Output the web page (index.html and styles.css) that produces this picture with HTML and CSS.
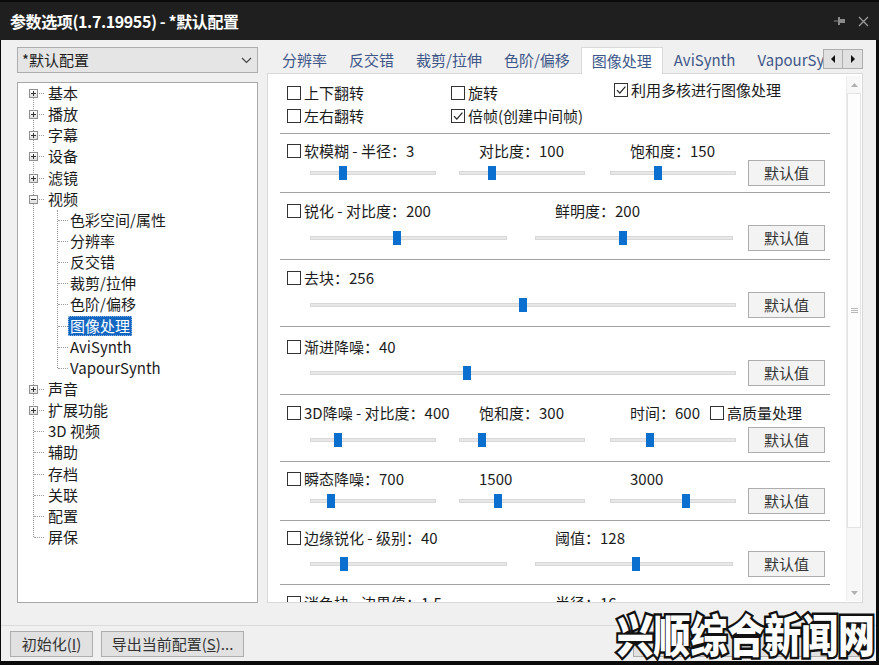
FILE: index.html
```html
<!DOCTYPE html>
<html lang="zh-CN">
<head>
<meta charset="utf-8">
<title>参数选项</title>
<link rel="stylesheet" href="styles.css">
</head>
<body>
<div class="window">
  <div class="titlebar">
    <span class="title">参数选项(1.7.19955) - *默认配置</span>
    <span class="tb-icons">
      <svg class="pin" width="12" height="10" viewBox="0 0 12 10"><path d="M0 5H4" stroke="#8a8a8a" stroke-width="1"/><rect x="4" y="1" width="2" height="8" fill="#8a8a8a"/><rect x="6" y="3" width="5" height="4" fill="#8a8a8a"/></svg>
      <svg class="close" width="11" height="11" viewBox="0 0 11 11"><path d="M1 1L10 10M10 1L1 10" stroke="#a0a0a0" stroke-width="1.2"/></svg>
    </span>
  </div>
  <div class="client">
    <div class="main">
      <div class="left">
        <div class="combo"><span>*默认配置</span><svg width="11" height="7" viewBox="0 0 11 7"><path d="M1 1L5.5 5.5L10 1" fill="none" stroke="#444" stroke-width="1.2"/></svg></div>
        <div class="tree">
          <div class="tree-root">
            <div class="ti l1"><span class="tg plus"></span>基本</div>
            <div class="ti l1"><span class="tg plus"></span>播放</div>
            <div class="ti l1"><span class="tg plus"></span>字幕</div>
            <div class="ti l1"><span class="tg plus"></span>设备</div>
            <div class="ti l1"><span class="tg plus"></span>滤镜</div>
            <div class="ti l1"><span class="tg"></span>视频</div>
            <div class="tree-children">
              <div class="ti l2">色彩空间/属性</div>
              <div class="ti l2">分辨率</div>
              <div class="ti l2">反交错</div>
              <div class="ti l2">裁剪/拉伸</div>
              <div class="ti l2">色阶/偏移</div>
              <div class="ti l2"><span class="sel">图像处理</span></div>
              <div class="ti l2">AviSynth</div>
              <div class="ti l2">VapourSynth</div>
            </div>
            <div class="ti l1"><span class="tg plus"></span>声音</div>
            <div class="ti l1"><span class="tg plus"></span>扩展功能</div>
            <div class="ti l1">3D 视频</div>
            <div class="ti l1">辅助</div>
            <div class="ti l1">存档</div>
            <div class="ti l1">关联</div>
            <div class="ti l1">配置</div>
            <div class="ti l1">屏保</div>
          </div>
        </div>
      </div>
      <div class="right">
        <div class="tabbar">
          <div class="tabs">
            <span class="tab">分辨率</span>
            <span class="tab">反交错</span>
            <span class="tab">裁剪/拉伸</span>
            <span class="tab">色阶/偏移</span>
            <span class="tab active">图像处理</span>
            <span class="tab">AviSynth</span>
            <span class="tab">VapourSynth</span>
          </div>
          <div class="tab-arrows">
            <span class="arr"><svg width="5" height="8" viewBox="0 0 5 8"><path d="M4 0V8L0 4Z" fill="#111"/></svg></span>
            <span class="arr"><svg width="5" height="8" viewBox="0 0 5 8"><path d="M1 0V8L5 4Z" fill="#111"/></svg></span>
          </div>
        </div>
        <div class="page">
          <div class="content">
            <div class="opts">
              <label class="chk"><span class="cb"></span>上下翻转</label>
              <label class="chk"><span class="cb"></span>旋转</label>
              <label class="chk raise"><span class="cb"><svg width="12" height="12" viewBox="0 0 12 12"><path d="M2 6.2L4.8 9.2L10.4 2.6" fill="none" stroke="#222" stroke-width="1.2"/></svg></span>利用多核进行图像处理</label>
              <label class="chk"><span class="cb"></span>左右翻转</label>
              <label class="chk"><span class="cb"><svg width="12" height="12" viewBox="0 0 12 12"><path d="M2 6.2L4.8 9.2L10.4 2.6" fill="none" stroke="#222" stroke-width="1.2"/></svg></span>倍帧(创建中间帧)</label>
            </div>

            <div class="sec c3 compact">
              <label class="lbl"><span class="cb"></span>软模糊 - 半径：3</label>
              <span class="lbl">对比度：100</span>
              <span class="lbl">饱和度：150</span>
              <div class="slider w126 first"><span class="thumb" style="--p:26.2%"></span></div>
              <div class="slider w126"><span class="thumb" style="--p:26.2%"></span></div>
              <div class="slider w126"><span class="thumb" style="--p:38.1%"></span></div>
              <button class="btn">默认值</button>
            </div>

            <div class="sec c2">
              <label class="lbl"><span class="cb"></span>锐化 - 对比度：200</label>
              <span class="lbl">鲜明度：200</span>
              <div class="slider w197 first"><span class="thumb" style="--p:44.2%"></span></div>
              <div class="slider w198"><span class="thumb" style="--p:44.4%"></span></div>
              <button class="btn">默认值</button>
            </div>

            <div class="sec c1">
              <label class="lbl"><span class="cb"></span>去块：256</label>
              <div class="slider w426 first"><span class="thumb" style="--p:50%"></span></div>
              <button class="btn">默认值</button>
            </div>

            <div class="sec c1 s68">
              <label class="lbl"><span class="cb"></span>渐进降噪：40</label>
              <div class="slider w426 first"><span class="thumb" style="--p:36.9%"></span></div>
              <button class="btn">默认值</button>
            </div>

            <div class="sec c3">
              <label class="lbl"><span class="cb"></span>3D降噪 - 对比度：400</label>
              <span class="lbl">饱和度：300</span>
              <span class="lbl">时间：600<span class="inline-chk"><span class="cb"></span>高质量处理</span></span>
              <div class="slider w126 first"><span class="thumb" style="--p:21.4%"></span></div>
              <div class="slider w126"><span class="thumb" style="--p:17.5%"></span></div>
              <div class="slider w126"><span class="thumb" style="--p:31.7%"></span></div>
              <button class="btn">默认值</button>
            </div>

            <div class="sec c3 compact">
              <label class="lbl"><span class="cb"></span>瞬态降噪：700</label>
              <span class="lbl">1500</span>
              <span class="lbl">3000</span>
              <div class="slider w126 first"><span class="thumb" style="--p:15.9%"></span></div>
              <div class="slider w126"><span class="thumb" style="--p:31%"></span></div>
              <div class="slider w126"><span class="thumb" style="--p:60.3%"></span></div>
              <button class="btn">默认值</button>
            </div>

            <div class="sec c2 s64">
              <label class="lbl"><span class="cb"></span>边缘锐化 - 级别：40</label>
              <span class="lbl">阈值：128</span>
              <div class="slider w197 first"><span class="thumb" style="--p:16.8%"></span></div>
              <div class="slider w198"><span class="thumb" style="--p:51%"></span></div>
              <button class="btn">默认值</button>
            </div>

            <div class="sec c2">
              <label class="lbl"><span class="cb"></span>消色块 - 边界值：1.5</label>
              <span class="lbl">半径：16</span>
              <div class="slider w197 first"><span class="thumb" style="--p:20%"></span></div>
              <div class="slider w198"><span class="thumb" style="--p:30%"></span></div>
              <button class="btn">默认值</button>
            </div>
          </div>
          <div class="vscroll">
            <span class="sarr"><svg width="7" height="4" viewBox="0 0 7 4"><path d="M0 4L3.5 0L7 4Z" fill="#b0b0b0"/></svg></span>
            <span class="sthumb"><span class="grip"></span></span>
            <span class="strack"></span>
            <span class="sarr"><svg width="7" height="4" viewBox="0 0 7 4"><path d="M0 0L3.5 4L7 0Z" fill="#b0b0b0"/></svg></span>
          </div>
        </div>
      </div>
    </div>
    <div class="footer">
      <div class="fgroup">
        <button class="fbtn b-init">初始化(<u>I</u>)</button>
        <button class="fbtn b-export">导出当前配置(<u>S</u>)...</button>
      </div>
      <div class="fgroup gap4">
        <span class="fbtn b-std"></span>
        <span class="fbtn b-std"></span>
        <span class="fbtn b-std"></span>
      </div>
    </div>
    <div class="watermark">兴顺综合新闻网</div>
  </div>
</div>
</body>
</html>
```

FILE: styles.css
```css
* { box-sizing: border-box; }
html, body { margin: 0; padding: 0; background: #0b0b0b; }
body {
  width: 879px; height: 665px; overflow: hidden;
  font-family: "Noto Sans CJK SC", "Microsoft YaHei", sans-serif;
  font-size: 15px; color: #1b1b1b;
}
.window { width: 879px; height: 665px; display: flex; flex-direction: column; }

/* title bar */
.titlebar {
  height: 40px; flex: none; background: #1f1f1f; border-top: 2px solid #0a0a0a;
  display: flex; align-items: center; justify-content: space-between;
  padding: 0 10px 0 10px; color: #fff;
}
.title { font-size: 16px; font-weight: 700; letter-spacing: -0.4px; }
.tb-icons { display: flex; align-items: center; gap: 12px; }

/* client */
.client {
  flex: 1; margin: 0 3px 4px 1px; background: #f0f0f0;
  position: relative; display: flex; flex-direction: column;
}
.main { display: flex; gap: 9px; padding: 7px 0 0 16px; }
.left { width: 241px; display: flex; flex-direction: column; }

.combo {
  height: 26px; border: 1px solid #adadad; background: #e5e5e5;
  display: flex; align-items: center; justify-content: space-between;
  padding: 0 5px 0 4px; margin-bottom: 9px; font-size: 15px; line-height: 20px;
}

/* tree */
.tree {
  height: 521px; border: 1px solid #a8a8a8; background: #fff;
  padding-top: 0; overflow: hidden;
}
.tree-root, .tree-children { position: relative; }
.tree-root::before {
  content: ""; position: absolute; left: 15px; top: 10px; bottom: 11px;
  border-left: 1px dotted #9c9c9c;
}
.tree-children::before {
  content: ""; position: absolute; left: 39px; top: 0; bottom: 11px;
  border-left: 1px dotted #9c9c9c;
}
.ti {
  height: 21.15px; line-height: 19px; position: relative; white-space: nowrap;
}
.ti.l1 { padding-left: 30px; }
.ti.l2 { padding-left: 52px; }
.ti::before {
  content: ""; position: absolute; top: 10px; width: 10px;
  border-top: 1px dotted #9c9c9c;
}
.ti.l1::before { left: 16px; }
.ti.l2::before { left: 40px; }
.tg {
  position: absolute; left: 11px; top: 6px; width: 9px; height: 9px; z-index: 1;
  border: 1px solid #8f8f8f; background: linear-gradient(#ffffff, #dedede);
}
.tg::before {
  content: ""; position: absolute; left: 1px; top: 3px; width: 5px; height: 1px; background: #333;
}
.tg.plus::after {
  content: ""; position: absolute; left: 3px; top: 1px; width: 1px; height: 5px; background: #333;
}
.sel {
  display: inline-block; background: #1366c2; color: #fff; line-height: 20px;
  padding: 0 2px; margin-left: -2px; outline: 1px dotted #8fb4e0; outline-offset: -1px;
}

/* tabs */
.right { width: 596px; display: flex; flex-direction: column; }
.tabbar { height: 27px; display: flex; }
.tabs {
  width: 556px; flex: none; display: flex; align-items: flex-start;
  padding-left: 4px; overflow: hidden; white-space: nowrap;
}
.tab {
  flex: none; height: 26px; line-height: 26px; padding: 0 11px;
  color: #3e5788; font-size: 15px;
}
.tab.active {
  height: 27px; line-height: 25px; background: #fff; position: relative; z-index: 2;
  border: 1px solid #d9d9d9; border-bottom: none; padding: 0 10px;
}
.tab-arrows { display: flex; margin-top: 2px; height: 20px; }
.arr {
  width: 20px; height: 20px; border: 1px solid #adadad; background: #e1e1e1;
  display: flex; align-items: center; justify-content: center;
}
.arr + .arr { border-left: none; }

.page {
  height: 530px; margin-top: -1px; border: 1px solid #d9d9d9; background: #fff;
  display: flex;
}
.content { flex: 1; padding: 0 16px 0 12px; overflow: hidden; }

.opts {
  display: grid; grid-template-columns: 164px 163px auto; grid-auto-rows: 23px;
  align-items: center; padding: 7px 0 6px 7px;
}
.chk, .lbl {
  display: flex; align-items: center; white-space: nowrap; line-height: 18px; height: 18px;
}
.chk.raise { margin-bottom: 6px; }
.cb {
  width: 14px; height: 14px; flex: none; border: 1px solid #333; background: #fff;
  margin-right: 3px; display: inline-flex; align-items: center; justify-content: center;
}
.inline-chk { display: inline-flex; align-items: center; margin-left: 10px; }

/* sections */
.sec {
  border-top: 1px solid #a3a3a3; display: grid; grid-template-rows: 18px 26px;
  row-gap: 5px; padding: 9px 5px 8px 7px; align-items: center;
}
.sec.compact { padding-top: 8px; row-gap: 0; padding-bottom: 6px; }
.sec.s64 { padding-top: 8px; row-gap: 4px; padding-bottom: 7px; }
.sec.s68 { padding-top: 11px; row-gap: 4px; padding-bottom: 8px; }
.c3 { grid-template-columns: 172px 151px 138px 77px; }
.c2 { grid-template-columns: 248px 213px 77px; }
.c1 { grid-template-columns: 461px 77px; }
.lbl { grid-row: 1; }
.lbl + .lbl { padding-left: 20px; }

.slider {
  grid-row: 2; justify-self: start; position: relative;
  height: 4px; background: #e7e7e7; border: 1px solid #d8d8d8;
}
.slider.first { margin-left: 23px; }
.w126 { width: 126px; }
.w197 { width: 197px; }
.w198 { width: 198px; }
.w426 { width: 426px; }
.thumb {
  position: absolute; left: var(--p); top: 50%;
  width: 8px; height: 14px; margin: -7px 0 0 -4px; background: #0a6fcf;
}
.btn {
  grid-row: 2; grid-column: -2; height: 26px; width: 77px;
  border: 1px solid #adadad; background: #f3f3f3; color: #333;
  font-family: inherit; font-size: 15px; padding: 0; line-height: 24px;
}

/* vertical scrollbar */
.vscroll {
  width: 15px; flex: none; margin: 2px 1px 1px 0; background: #f7f7f7;
  display: flex; flex-direction: column; border-left: 1px solid #ececec;
}
.sarr { height: 17px; flex: none; display: flex; align-items: center; justify-content: center; }
.sthumb {
  height: 435px; flex: none; background: #fdfdfd; border: 1px solid #e3e3e3;
  display: flex; align-items: center; justify-content: center;
}
.grip {
  width: 7px; height: 5px; border-top: 1px solid #b8b8b8; border-bottom: 1px solid #b8b8b8;
  background: linear-gradient(#fdfdfd 0 1px, #b8b8b8 1px 2px, #fdfdfd 2px);
  background-size: 100% 3px; background-repeat: no-repeat; background-position: 0 0;
}
.strack { flex: 1; }

/* footer */
.footer {
  margin-top: 22px; border-top: 1px solid #dadada;
  padding: 5px 4px 0 9px; display: flex; justify-content: space-between;
}
.fgroup { display: flex; gap: 8px; }
.fgroup.gap4 { gap: 4px; }
.fbtn {
  height: 26px; border: 1px solid #adadad; background: #e1e1e1; color: #333;
  font-family: inherit; font-size: 15px; padding: 0; line-height: 24px;
}
.b-init { width: 83px; }
.b-export { width: 143px; }
.b-std { width: 77px; display: block; }

.watermark {
  position: absolute; right: 1px; bottom: 4px;
  font-size: 45px; line-height: 46px; font-weight: 900; color: #fff;
  -webkit-text-stroke: 5px #111; paint-order: stroke fill;
  transform: scaleX(0.82); transform-origin: right bottom; white-space: nowrap;
}
```
